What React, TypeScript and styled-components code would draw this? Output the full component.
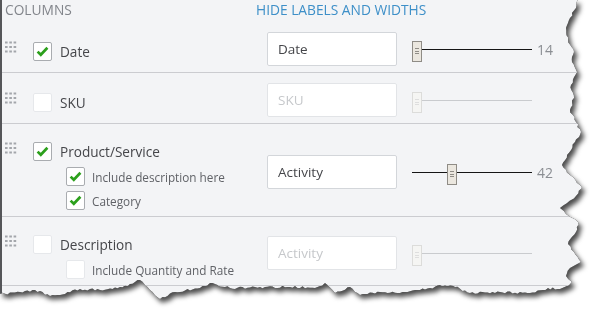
import React from "react";
import styled, { createGlobalStyle } from "styled-components";

const GlobalStyle = createGlobalStyle`
  html, body {
    margin: 0;
    padding: 0;
    background: #ffffff;
  }
  body {
    font-family: "Open Sans", "Liberation Sans", sans-serif;
    overflow: hidden;
  }
`;

// torn paper edge, generated once from a few hand picked points
const RIGHT_EDGE: [number, number][] = [
  [578, 0], [576, 8], [570, 18], [566, 28], [568, 40], [574, 52], [572, 62],
  [577, 72], [571, 85], [574, 98], [570, 110], [576, 122], [581, 132],
  [575, 142], [567, 155], [562, 165], [570, 175], [582, 188], [576, 196],
  [560, 208], [566, 214], [578, 222], [576, 232], [568, 244], [574, 252],
  [581, 262], [570, 268], [566, 276], [572, 282], [566, 288],
];
const BOTTOM_EDGE: [number, number][] = [
  [560, 289], [548, 288], [530, 293], [500, 292], [470, 293], [455, 287],
  [440, 285], [430, 288], [400, 293], [380, 292], [360, 295], [350, 287],
  [335, 293], [325, 283], [315, 288], [290, 287], [260, 287], [230, 288],
  [210, 283], [200, 288], [175, 292], [160, 299], [150, 290], [140, 280],
  [130, 284], [120, 287], [100, 290], [80, 289], [65, 294], [50, 296],
  [35, 290], [20, 292], [0, 294],
];

function tornPolygon() {
  let seed = 11;
  const rnd = () => {
    seed = (seed * 16807) % 2147483647;
    return seed / 2147483647 - 0.5;
  };
  const pts: string[] = ["0px 0px"];
  const walk = (keys: [number, number][], vertical: boolean) => {
    for (let i = 0; i < keys.length - 1; i++) {
      const [x1, y1] = keys[i];
      const [x2, y2] = keys[i + 1];
      const len = vertical ? Math.abs(y2 - y1) : Math.abs(x2 - x1);
      const steps = Math.max(1, Math.round(len / 2.5));
      for (let s = 0; s < steps; s++) {
        const t = s / steps;
        let x = x1 + (x2 - x1) * t;
        let y = y1 + (y2 - y1) * t;
        if (s > 0) {
          if (vertical) x += rnd() * 2.4;
          else y += rnd() * 2.4;
        }
        pts.push(`${x.toFixed(1)}px ${y.toFixed(1)}px`);
      }
    }
  };
  walk(RIGHT_EDGE, true);
  walk(BOTTOM_EDGE, false);
  pts.push("0px 294px");
  return `polygon(${pts.join(", ")})`;
}

const TORN = tornPolygon();

const Sheet = styled.div`
  width: 604px;
  height: 321px;
  filter: drop-shadow(0 0 0.6px rgba(0, 0, 0, 0.95))
    drop-shadow(3px 4px 2.5px rgba(0, 0, 0, 0.7));
`;

const Paper = styled.div`
  width: 590px;
  height: 302px;
  box-sizing: border-box;
  background: #f3f4f6;
  border-left: 2px solid #555659;
  clip-path: ${TORN};
`;

const Header = styled.div`
  display: grid;
  grid-template-columns: 251px auto;
  height: 22px;
  padding-left: 3px;
  font-size: 13.75px;
  line-height: 19px;
  text-transform: uppercase;
`;

const HeaderTitle = styled.span`
  color: #82858b;
`;

const HeaderLink = styled.a`
  color: #3d8fc8;
  text-decoration: none;
  cursor: pointer;
`;

const Row = styled.div`
  display: grid;
  grid-template-columns: 31px 234px 145px auto;
  align-items: center;
  padding: 10px 0 6px;
  border-bottom: 1px solid #cbccd0;
`;

const Handle = styled.svg<{ $top: number }>`
  align-self: start;
  margin: ${(p) => p.$top}px 0 0 2px;
`;

const LabelCol = styled.div<{ $top: number }>`
  align-self: start;
  padding-top: ${(p) => p.$top}px;
  display: flex;
  flex-direction: column;
`;

const MainLine = styled.label`
  display: flex;
  align-items: center;
  gap: 8px;
  height: 19px;
  font-size: 13.6px;
  color: #45464a;
`;

const SubList = styled.div`
  display: flex;
  flex-direction: column;
  gap: 5px;
  margin: 6px 0 0 33px;
`;

const SubLine = styled.label`
  display: flex;
  align-items: center;
  gap: 7px;
  height: 19px;
  font-size: 11.75px;
  color: #606267;
`;

const Box = styled.span<{ $checked: boolean }>`
  width: 19px;
  height: 19px;
  box-sizing: border-box;
  flex: none;
  display: flex;
  align-items: center;
  justify-content: center;
  background: #ffffff;
  border: 1px solid ${(p) => (p.$checked ? "#a9acb0" : "#e6e8eb")};
  border-radius: 2px;
`;

const TextField = styled.input`
  width: 130px;
  height: 34px;
  box-sizing: border-box;
  padding: 0 10px;
  background: #ffffff;
  border: 1px solid #d3d6da;
  border-radius: 2px;
  font-family: "Open Sans", "Liberation Sans", sans-serif;
  font-size: 13.5px;
  color: #45464a;
  outline: none;

  &:disabled {
    border-color: #e2e4e7;
    color: #c6c8cb;
    background: #ffffff;
  }
`;

const SliderWrap = styled.div`
  display: flex;
  margin-top: 4px;
`;

const Track = styled.div`
  position: relative;
  width: 120px;
  height: 21px;
`;

const TrackLine = styled.div<{ $off: boolean }>`
  position: absolute;
  left: 0;
  right: 0;
  top: 8px;
  height: 1.5px;
  background: ${(p) => (p.$off ? "#c9cbce" : "#151515")};
`;

const Thumb = styled.div<{ $off: boolean }>`
  position: absolute;
  top: 0;
  width: 10px;
  height: 21px;
  box-sizing: border-box;
  border: 1px solid ${(p) => (p.$off ? "#dcdcda" : "#8f8c86")};
  background: ${(p) => (p.$off ? "#f5f5f3" : "#ebe7df")};
  display: flex;
  flex-direction: column;
  align-items: center;
  justify-content: center;
  gap: 1.5px;

  & > i {
    display: block;
    width: 4px;
    height: 1px;
    background: ${(p) => (p.$off ? "#dedede" : "#8f8c86")};
  }
`;

const Value = styled.span`
  align-self: flex-start;
  margin-left: 5px;
  font-size: 14px;
  line-height: 17px;
  color: #8b8e93;
`;

function Grip({ top }: { top: number }) {
  const xs = [1, 5.3, 9.6];
  const ys = [0.5, 5, 9.5];
  return (
    <Handle $top={top} width="13" height="12" viewBox="0 0 13 12">
      {ys.map((y) =>
        xs.map((x) => (
          <rect key={`${x}-${y}`} x={x} y={y} width="2.6" height="2" fill="#a3a6ab" />
        ))
      )}
    </Handle>
  );
}

function Check({ checked }: { checked: boolean }) {
  return (
    <Box $checked={checked}>
      {checked && (
        <svg width="13" height="11" viewBox="0 0 13 11">
          <path
            d="M1.6 5.6 L4.8 8.8 L11.4 1.8"
            fill="none"
            stroke="#2ca01c"
            strokeWidth="2.7"
            strokeLinejoin="miter"
          />
        </svg>
      )}
    </Box>
  );
}

type Col = {
  name: string;
  on: boolean;
  field: string;
  width?: number;
  subs?: { name: string; on: boolean }[];
};

const columns: Col[] = [
  { name: "Date", on: true, field: "Date", width: 14 },
  { name: "SKU", on: false, field: "SKU" },
  {
    name: "Product/Service",
    on: true,
    field: "Activity",
    width: 42,
    subs: [
      { name: "Include description here", on: true },
      { name: "Category", on: true },
    ],
  },
  {
    name: "Description",
    on: false,
    field: "Activity",
    subs: [{ name: "Include Quantity and Rate", on: false }],
  },
];

function ColumnRow({ col }: { col: Col }) {
  const hasSubs = !!col.subs;
  const off = !col.on;
  const thumbLeft = col.width ? Math.round(((col.width - 14) / 28) * 35) : 0;
  return (
    <Row>
      <Grip top={hasSubs ? 8 : 9} />
      <LabelCol $top={hasSubs ? 8 : 10}>
        <MainLine>
          <Check checked={col.on} />
          {col.name}
        </MainLine>
        {hasSubs && (
          <SubList>
            {col.subs!.map((s) => (
              <SubLine key={s.name}>
                <Check checked={s.on} />
                {s.name}
              </SubLine>
            ))}
          </SubList>
        )}
      </LabelCol>
      <div>
        <TextField readOnly disabled={off} value={col.field} />
      </div>
      <SliderWrap>
        <Track>
          <TrackLine $off={off} />
          <Thumb $off={off} style={{ left: thumbLeft }}>
            <i />
            <i />
            <i />
          </Thumb>
        </Track>
        {col.width && <Value>{col.width}</Value>}
      </SliderWrap>
    </Row>
  );
}

export default function App() {
  return (
    <>
      <GlobalStyle />
      <Sheet>
        <Paper>
          <Header>
            <HeaderTitle>Columns</HeaderTitle>
            <HeaderLink>Hide labels and widths</HeaderLink>
          </Header>
          {columns.map((c) => (
            <ColumnRow key={c.name} col={c} />
          ))}
        </Paper>
      </Sheet>
    </>
  );
}
